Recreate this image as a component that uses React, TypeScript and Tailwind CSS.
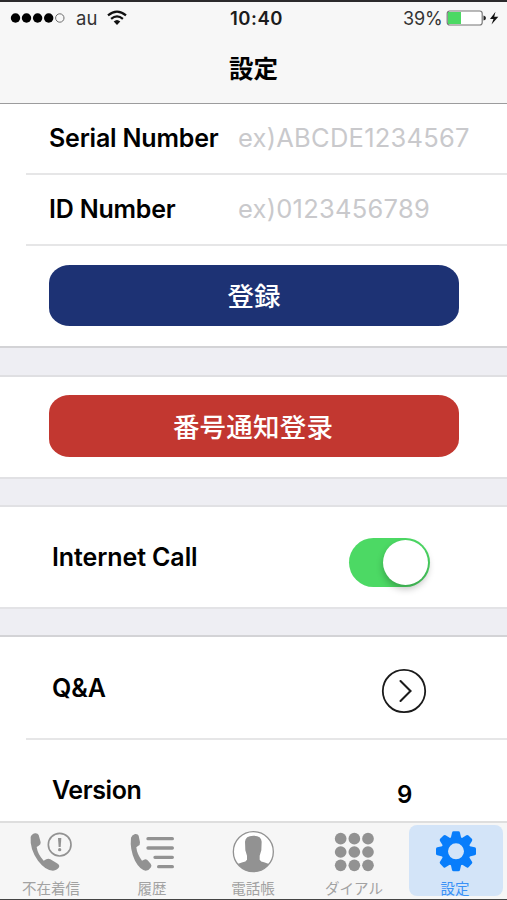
import type { ReactNode } from "react";

function StatusBar() {
  return (
    <div className="flex h-[34px] shrink-0 items-center border-t-2 border-[#2b2a2c] text-[18px] leading-[34px]">
      <div className="flex w-[230px] items-center">
        <svg className="ml-[10px] h-[12px] w-[56px]" viewBox="0 0 56 12">
          {[5.5, 16.5, 27.6, 38.7].map((x) => (
            <circle key={x} cx={x} cy="6" r="4.7" fill="#000" />
          ))}
          <circle cx="49.8" cy="6" r="4.2" fill="none" stroke="#6d6d6d" strokeWidth="1" />
        </svg>
        <span className="ml-[10px] w-[21px] whitespace-nowrap text-[18.5px] text-[#333]">au</span>
        <svg className="ml-[10px] h-[16px] w-[20px]" viewBox="0 0 20 16">
          <path d="M1 5.4Q10-2.2 19 5.4" fill="none" stroke="#111" strokeWidth="2.2" />
          <path d="M4.1 8.8Q10 3.8 15.9 8.8" fill="none" stroke="#111" strokeWidth="2.2" />
          <path d="M6.7 11.5Q10 8.4 13.3 11.5L10 15Z" fill="#111" />
        </svg>
      </div>
      <span className="w-[54px] whitespace-nowrap text-[18.5px] font-semibold tracking-[0.5px] text-[#1c1c1c]">
        10:40
      </span>
      <div className="flex flex-1 items-center">
        <span className="ml-[119px] w-[39px] whitespace-nowrap pt-[2px] tracking-[-0.2px] text-[#333]">39%</span>
        <svg className="ml-[4px] h-[18px] w-[56px]" viewBox="0 0 56 18">
          <rect x="1.2" y="2" width="35" height="14" rx="2.5" fill="#fff" stroke="#777" strokeWidth="1.2" />
          <path d="M2 3H15V15H2Z" fill="#4cd964" />
          <path d="M37.5 6.5Q40 7 40 9T37.5 11.5Z" fill="#222" />
          <path d="M49.5 2.8L44 10H47.5L45.5 15.5L52.3 7.8H48.2Z" fill="#111" />
        </svg>
      </div>
    </div>
  );
}

function Field({ label, example }: { label: string; example: string }) {
  return (
    <div className="ml-[26px] flex h-[71px] shrink-0 items-center border-b-2 border-[#e6e6e7] pl-[23px] pt-[1px] text-[25px]">
      <span className="w-[189px] whitespace-nowrap font-semibold tracking-[-0.2px]">{label}</span>
      <span className="whitespace-nowrap pb-px text-[25.5px] tracking-[0.25px] text-[#c9c9cc]">{example}</span>
    </div>
  );
}

function Action({ label, className }: { label: string; className: string }) {
  return (
    <button
      className={`ml-[49px] block h-[61.5px] w-[410px] rounded-[21px/18px] pt-[4px] text-center text-[26.5px] font-medium text-white ${className}`}
    >
      {label}
    </button>
  );
}

function Gap({ className }: { className: string }) {
  return <div className={`shrink-0 border-y-2 bg-[#eeeef3] ${className}`} />;
}

function Tab({ label, children, active = false }: { label: string; children: ReactNode; active?: boolean }) {
  return (
    <div
      className={`flex h-[71px] w-[94px] shrink-0 flex-col items-center rounded-[8px] ${
        active ? "bg-[#d3e4f8] text-[#3a91f6]" : "text-[#a2a2a2]"
      }`}
    >
      <div className="mt-[4px] flex h-[45px] items-center">{children}</div>
      <span className="mr-[2px] mt-[4px] whitespace-nowrap text-[14.5px] leading-[21px]">{label}</span>
    </div>
  );
}

export default function App() {
  return (
    <div className="flex h-[900px] w-[507px] flex-col overflow-hidden bg-white font-[Inter,'Noto_Sans_CJK_JP',sans-serif] text-black">
      <header className="flex h-[104px] shrink-0 flex-col border-b-[1.5px] border-[#9c9c9d] bg-[#f7f7f7]">
        <StatusBar />
        <h1 className="flex h-[68px] items-center justify-center pt-[2px] text-[24.5px] font-bold">設定</h1>
      </header>

      <Field label="Serial Number" example="ex)ABCDE1234567" />
      <Field label="ID Number" example="ex)0123456789" />
      <div className="h-[100px] shrink-0 pt-[18.5px]">
        <Action label="登録" className="bg-[#1d3274]" />
      </div>
      <Gap className="h-[31px] border-b-[#dfdfe2] border-t-[#d3d3d6]" />
      <div className="h-[100px] shrink-0 pt-[18px]">
        <Action label="番号通知登录" className="bg-[#c23730] pr-[2px] tracking-[0.2px]" />
      </div>
      <Gap className="h-[30px] border-[#e1e1e4]" />

      <div className="flex h-[100px] shrink-0 items-center pl-[52px] text-[25px]">
        <span className="w-[297px] pt-px font-semibold tracking-[-0.1px]">Internet Call</span>
        <div className="mt-[10px] flex h-[49px] w-[81px] items-center justify-end rounded-full bg-[#4cd964] pr-[2px]">
          <div className="size-[45px] rounded-full bg-white shadow-[0_4px_7px_rgba(0,0,0,0.25)]" />
        </div>
      </div>
      <Gap className="h-[30px] border-b-[#d3d3d6] border-t-[#e3e3e6]" />
      <div className="ml-[26px] flex h-[103px] shrink-0 items-center border-b-2 border-[#e6e6e7] pl-[26px] text-[25px]">
        <span className="w-[329px] pt-[2px] font-semibold tracking-[-0.1px]">Q&amp;A</span>
        <svg className="mt-[7px] size-[46px]" viewBox="0 0 46 46" fill="none" stroke="#1b1b1b">
          <circle cx="23" cy="23" r="21.2" strokeWidth="1.8" />
          <path d="M19.5 13L29.5 23L19.5 33" strokeWidth="2.1" strokeLinecap="round" />
        </svg>
      </div>
      <div className="flex h-[81px] shrink-0 items-center pl-[52px] pt-[20px] text-[25px] font-semibold">
        <span className="w-[345px] tracking-[-0.4px]">Version</span>
        <span className="mt-[8px] text-[24px]">9</span>
      </div>

      <footer className="flex h-[79px] shrink-0 gap-[7px] border-b border-t-2 border-b-[#444] border-t-[#dedede] bg-[#f6f6f6] pl-[5px] pt-[2px]">
        <Tab label="不在着信">
          <svg className="h-[45px] w-[60px]" viewBox="65 42 180 135" fill="#929292">
            <path d="M91 66Q93 58 104 55Q112 54 115 60L121 82Q122 89 115 92L109 96Q112 118 130 137L138 133Q144 129 150 133L170 145Q179 150 176 157Q171 166 158 167Q135 166 113 137Q88 103 91 66Z" />
            <circle cx="178" cy="89" r="34" fill="none" stroke="#929292" strokeWidth="5" />
            <path d="M173 69H183L181 96H175Z" />
            <circle cx="178" cy="104" r="5" />
          </svg>
        </Tab>
        <Tab label="履歴">
          <svg className="h-[45px] w-[60px]" viewBox="370 42 180 135" fill="#929292">
            <path d="M394 68Q396 60 406 57Q415 56 417 62L421 82Q422 90 415 93L410 97Q412 118 427 137L433 134Q438 131 443 135L453 146Q457 151 454 157Q449 166 438 167Q420 163 406 137Q390 103 394 68Z" />
            <path d="M445 71H518M445 99H518M466 127H518M477 155H518" stroke="#929292" strokeWidth="10" strokeLinecap="round" />
          </svg>
        </Tab>
        <Tab label="電話帳">
          <svg className="h-[45px] w-[60px]" viewBox="72 42 180 135">
            <clipPath id="contact-clip">
              <circle cx="160" cy="110" r="60" />
            </clipPath>
            <circle cx="160" cy="110" r="60" fill="#fff" />
            <path
              clipPath="url(#contact-clip)"
              fill="#929292"
              d="M135 80Q136 62 160 62T185 80L184 106L179 122V134Q182 140 192 142L222 152V174H98V152L128 142Q138 140 141 134V122L136 106Z"
            />
            <circle cx="160" cy="110" r="60" fill="none" stroke="#929292" strokeWidth="4" />
          </svg>
        </Tab>
        <Tab label="ダイアル">
          <svg className="h-[45px] w-[60px]" viewBox="375 42 180 135" fill="#929292">
            {[71, 111, 151].map((y) => [422, 463, 504].map((x) => <circle key={`${x}-${y}`} cx={x} cy={y} r="17.5" />))}
          </svg>
        </Tab>
        <Tab label="設定" active>
          <svg className="h-[45px] w-[60px]" viewBox="-90 -67 180 135" fill="#087dfb">
            {[0, 45, 90, 135, 180, 225, 270, 315].map((a) => (
              <path key={a} transform={`rotate(${a})`} d="M-16-38L-12-56Q-11-60-7-60H7Q11-60 12-56L16-38Z" />
            ))}
            <circle r="34" fill="none" stroke="#087dfb" strokeWidth="20" />
          </svg>
        </Tab>
      </footer>
    </div>
  );
}
